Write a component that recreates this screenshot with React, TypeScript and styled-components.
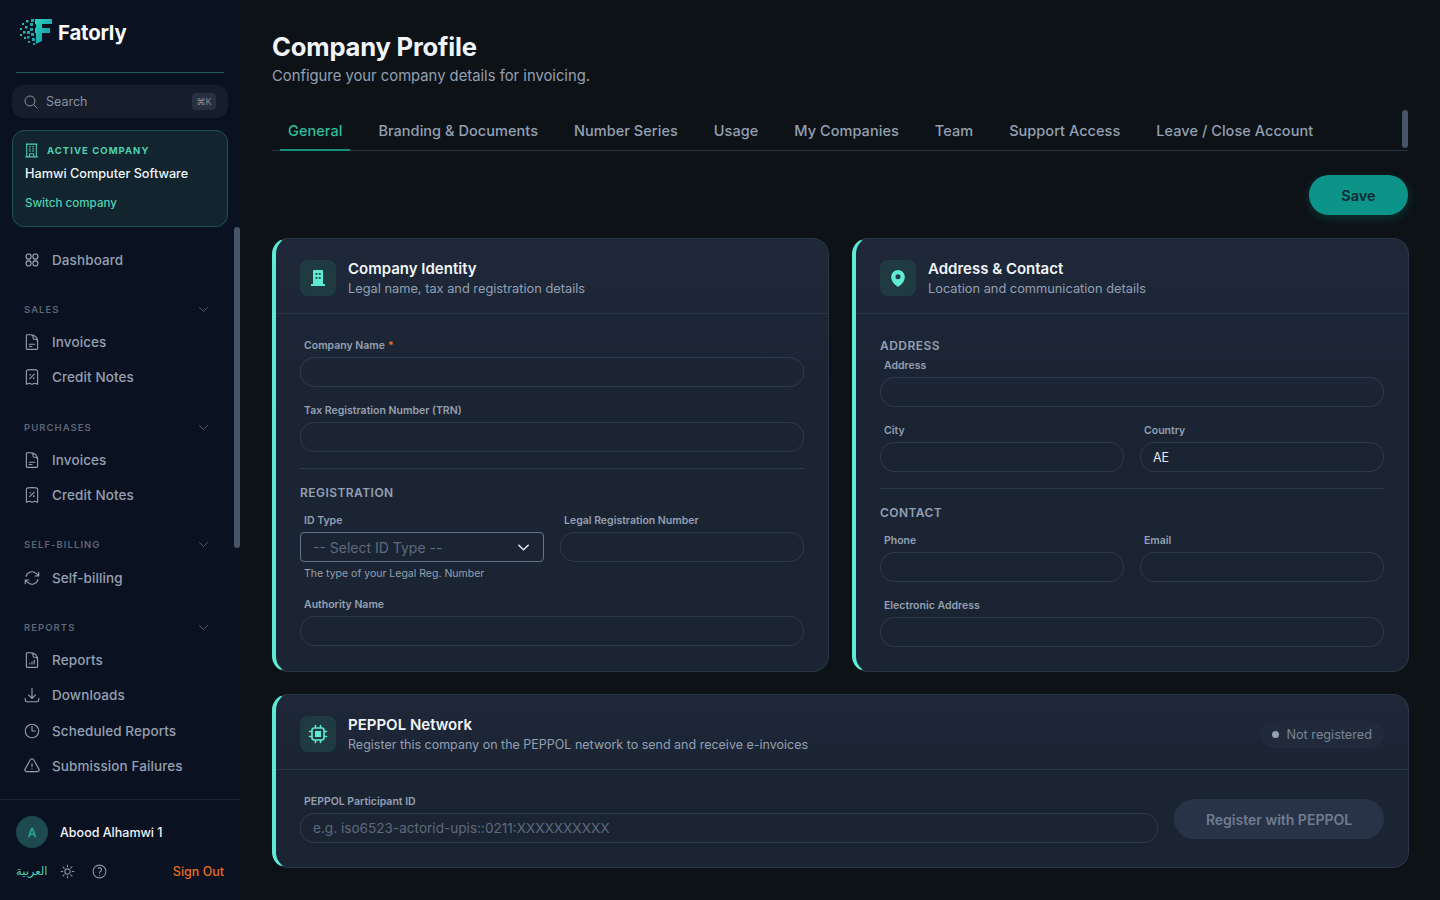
import React from "react";
import styled, { createGlobalStyle } from "styled-components";
import {
  HiOutlineMagnifyingGlass,
  HiOutlineBuildingOffice,
  HiOutlineChevronDown,
  HiOutlineDocumentText,
  HiOutlineReceiptPercent,
  HiOutlineArrowPath,
  HiOutlineDocumentChartBar,
  HiOutlineArrowDownTray,
  HiOutlineClock,
  HiOutlineExclamationTriangle,
  HiOutlineSun,
  HiOutlineQuestionMarkCircle,
  HiMapPin,
} from "react-icons/hi2";

const FONT = `Inter, "Noto Sans", "DejaVu Sans", sans-serif`;

const GlobalStyle = createGlobalStyle`
  * { box-sizing: border-box; }
  html, body { margin: 0; height: 100%; background: #0d1217; overflow: hidden; }
  body { font-family: ${FONT}; color: #e2e8f0; }
`;

const Shell = styled.div`
  display: flex;
  width: 1440px;
  height: 900px;
  overflow: hidden;
`;

const Sidebar = styled.aside`
  width: 240px;
  flex: none;
  height: 900px;
  background: #0a1120;
  display: flex;
  flex-direction: column;
`;

const Brand = styled.div`
  margin: 0 16px;
  height: 73px;
  border-bottom: 1px solid #1d5a5c;
  display: flex;
  align-items: flex-start;
  gap: 5px;
  padding: 18px 0 0 3px;
`;

const BrandName = styled.span`
  font-size: 20.4px;
  font-weight: 700;
  color: #f8fafc;
  line-height: 30px;
  letter-spacing: -0.2px;
`;

const SearchBox = styled.div`
  margin: 12px 12px 0;
  height: 33px;
  border-radius: 12px;
  background: #161e2c;
  display: flex;
  align-items: center;
  padding: 0 12px 0 11px;
  gap: 7px;
  color: #8792a4;
  font-size: 12.5px;
  svg { font-size: 16px; }
`;

const Kbd = styled.span`
  margin-left: auto;
  width: 24px;
  height: 17px;
  border-radius: 4px;
  background: #283141;
  color: #7d8899;
  font-size: 9px;
  display: flex;
  align-items: center;
  justify-content: center;
`;

const ActiveCard = styled.div`
  margin: 12px 12px 0;
  height: 97px;
  border-radius: 12px;
  background: #12252e;
  border: 1px solid #1f5054;
  padding: 12px 12px 0;
`;

const ActiveLabel = styled.div`
  display: flex;
  align-items: center;
  gap: 7px;
  font-size: 9.5px;
  font-weight: 700;
  letter-spacing: 1.05px;
  color: #4fd1b5;
  height: 15px;
  svg { font-size: 17px; margin-left: -2px; }
`;

const ActiveName = styled.div`
  margin-top: 7px;
  font-size: 12.7px;
  font-weight: 500;
  color: #f1f5f9;
  line-height: 18px;
`;

const SwitchLink = styled.div`
  margin-top: 12px;
  font-size: 11.6px;
  font-weight: 500;
  color: #4fd1b5;
  line-height: 16px;
`;

const Nav = styled.nav`
  position: relative;
  flex: 1;
  min-height: 0;
  overflow: hidden;
  padding-top: 15px;
`;

const ScrollThumb = styled.div<{ $height: number }>`
  position: absolute;
  top: 0;
  right: 0;
  width: 6px;
  height: ${(p) => p.$height}px;
  border-radius: 3px;
  background: #475569;
`;

const NavItem = styled.div`
  height: 35.4px;
  display: flex;
  align-items: center;
  gap: 11px;
  padding-left: 23px;
  font-size: 13.5px;
  font-weight: 500;
  letter-spacing: 0.1px;
  color: #94a0b2;
  svg { font-size: 18px; flex: none; }
`;

const NavHeader = styled.div`
  height: 16px;
  margin: 24px 0 7px;
  padding: 0 30px 0 24px;
  display: flex;
  align-items: center;
  justify-content: space-between;
  font-size: 9.5px;
  font-weight: 600;
  letter-spacing: 1.05px;
  color: #5c6779;
  svg { font-size: 13px; }
`;

const UserPanel = styled.div`
  height: 101px;
  flex: none;
  border-top: 1px solid #1e2635;
  padding: 16px 16px 0;
`;

const UserRow = styled.div`
  display: flex;
  align-items: center;
  gap: 12px;
`;

const Avatar = styled.div`
  width: 32px;
  height: 32px;
  border-radius: 50%;
  background: #1d4a4f;
  color: #21a98f;
  font-size: 12px;
  font-weight: 600;
  display: flex;
  align-items: center;
  justify-content: center;
`;

const UserName = styled.span`
  font-size: 12.5px;
  font-weight: 500;
  color: #f1f5f9;
`;

const UserActions = styled.div`
  display: flex;
  align-items: center;
  margin-top: 13px;
  height: 20px;
  color: #8b96a8;
  svg { font-size: 17px; }
`;

const Lang = styled.span`
  font-size: 11.5px;
  color: #4fd1b5;
  width: 42.5px;
`;

const IconSlot = styled.span`
  display: flex;
  width: 32px;
`;

const SignOut = styled.span`
  margin-left: auto;
  font-size: 12.5px;
  font-weight: 500;
  color: #ea6c23;
`;

const Main = styled.main`
  flex: 1;
  min-width: 0;
  padding: 32px 32px 0;
  background: #0d1217;
`;

const Title = styled.h1`
  margin: 0;
  font-size: 25.6px;
  font-weight: 700;
  line-height: 30px;
  color: #f1f5f9;
  letter-spacing: -0.2px;
`;

const Subtitle = styled.p`
  margin: 3px 0 0;
  font-size: 14.8px;
  line-height: 22px;
  color: #94a0b2;
`;

const Tabs = styled.div`
  position: relative;
  margin-top: 23px;
  height: 41px;
  padding-left: 8px;
  display: flex;
  border-bottom: 1px solid #2c3645;
`;

const Tab = styled.div<{ $active?: boolean }>`
  height: 40px;
  padding: 0 8px;
  margin-right: 20px;
  display: flex;
  align-items: center;
  font-size: 14.5px;
  font-weight: 500;
  letter-spacing: 0.05px;
  white-space: nowrap;
  color: ${(p) => (p.$active ? "#2ebd9f" : "#94a0b2")};
  box-shadow: ${(p) => (p.$active ? "inset 0 -1px 0 #14907f, 0 1px 0 #14907f" : "none")};
`;

const SaveRow = styled.div`
  display: flex;
  justify-content: flex-end;
  margin-top: 24px;
`;

const SaveButton = styled.button`
  width: 99px;
  height: 40px;
  border: none;
  border-radius: 20px;
  background: #0d9488;
  color: #0c2a33;
  font-family: ${FONT};
  font-size: 14.5px;
  font-weight: 600;
  box-shadow: 0 3px 10px rgba(13, 148, 136, 0.28);
`;

const CardGrid = styled.div`
  display: grid;
  grid-template-columns: 557px 557px;
  gap: 22px 23px;
  margin-top: 23px;
`;

const Card = styled.section<{ $wide?: boolean }>`
  grid-column: ${(p) => (p.$wide ? "1 / 3" : "auto")};
  height: ${(p) => (p.$wide ? "174px" : "434px")};
  background: linear-gradient(180deg, #1e2839 0%, #1b2433 40%);
  border: 1px solid #2a3547;
  border-left: 4px solid #5eead4;
  border-radius: 16px;
`;

const CardHeader = styled.header`
  height: 75px;
  padding: 4px 24px 0;
  display: flex;
  align-items: center;
  gap: 12px;
  border-bottom: 1px solid #2a3547;
`;

const HeaderIcon = styled.div`
  width: 36px;
  height: 36px;
  border-radius: 8px;
  background: #203a42;
  color: #5eead4;
  display: flex;
  align-items: center;
  justify-content: center;
  font-size: 20px;
`;

const HeaderText = styled.div`
  flex: 1;
`;

const CardTitle = styled.div`
  font-size: 15px;
  font-weight: 600;
  line-height: 20px;
  color: #f1f5f9;
`;

const CardSubtitle = styled.div<{ $size?: number }>`
  margin-top: 1px;
  font-size: ${(p) => p.$size ?? 12.8}px;
  line-height: 18px;
  color: #94a0b2;
`;

const CardBody = styled.div`
  padding: 25px 24px 0;
`;

const Label = styled.div`
  padding-left: 4px;
  height: 14px;
  line-height: 14px;
  font-size: 10.5px;
  font-weight: 600;
  color: #94a0b2;
  margin-bottom: 4px;
`;

const Required = styled.span`
  color: #ea6c23;
  margin-left: 3px;
`;

const Input = styled.div<{ $placeholder?: boolean }>`
  height: 30px;
  border: 1px solid #2e394b;
  border-radius: 14px;
  padding: 0 12px;
  display: flex;
  align-items: center;
  font-size: ${(p) => (p.$placeholder ? "13.6px" : "12.5px")};
  color: ${(p) => (p.$placeholder ? "#5e6a7d" : "#e2e8f0")};
  white-space: nowrap;
`;

const SelectBox = styled.div`
  height: 30px;
  border: 1px solid #64748b;
  border-radius: 4px;
  padding: 0 12px;
  display: flex;
  align-items: center;
  justify-content: space-between;
  font-size: 14px;
  color: #5e6a7d;
  svg { color: #e2e8f0; font-size: 15px; stroke-width: 2.4; }
`;

const Hint = styled.div`
  padding-left: 4px;
  margin-top: 5px;
  height: 14px;
  line-height: 14px;
  font-size: 10.5px;
  color: #94a0b2;
`;

const Field = styled.div<{ $top?: number }>`
  margin-top: ${(p) => p.$top ?? 0}px;
`;

const Columns = styled.div<{ $top?: number }>`
  display: grid;
  grid-template-columns: 1fr 1fr;
  gap: 16px;
  margin-top: ${(p) => p.$top ?? 0}px;
`;

const Divider = styled.hr`
  border: none;
  border-top: 1px solid #2e394b;
  margin: 16px 0 16px;
`;

const SectionLabel = styled.div<{ $first?: boolean }>`
  height: 16px;
  margin-top: ${(p) => (p.$first ? "-1px" : "0")};
  line-height: 16px;
  font-size: 12px;
  font-weight: 600;
  letter-spacing: 0.45px;
  color: #94a0b2;
`;

const StatusPill = styled.div`
  height: 27px;
  padding: 0 12px;
  border-radius: 14px;
  background: #202a3a;
  display: flex;
  align-items: center;
  gap: 7px;
  font-size: 12.7px;
  color: #7b8799;
`;

const StatusDot = styled.span`
  width: 7px;
  height: 7px;
  border-radius: 50%;
  background: #94a0b2;
`;

const PeppolRow = styled.div`
  display: flex;
  align-items: flex-end;
  gap: 16px;
`;

const PeppolField = styled.div`
  flex: 1;
`;

const RegisterButton = styled.button`
  width: 210px;
  height: 40px;
  margin-bottom: 4px;
  border: none;
  border-radius: 20px;
  background: #283347;
  color: #6f7c90;
  font-family: ${FONT};
  font-size: 14px;
  font-weight: 600;
`;

const GridIcon = () => (
  <svg width="18" height="18" viewBox="0 0 18 18" fill="none" stroke="currentColor" strokeWidth="1.3">
    <rect x="3.2" y="3.2" width="4.8" height="4.8" rx="1.7" />
    <rect x="10" y="3.2" width="4.8" height="4.8" rx="1.7" />
    <rect x="3.2" y="10" width="4.8" height="4.8" rx="1.7" />
    <rect x="10" y="10" width="4.8" height="4.8" rx="1.7" />
  </svg>
);

const BuildingIcon = () => (
  <svg width="14" height="16" viewBox="0 0 14 16">
    <path d="M2 1a1 1 0 0 1 1-1h8a1 1 0 0 1 1 1v13H2Z" fill="currentColor" />
    <rect x="0" y="14" width="14" height="2" fill="currentColor" />
    <rect x="4.6" y="3" width="1.8" height="1.8" fill="#203a42" />
    <rect x="7.8" y="3" width="1.8" height="1.8" fill="#203a42" />
    <rect x="4.6" y="7" width="1.8" height="1.8" fill="#203a42" />
    <rect x="7.8" y="7" width="1.8" height="1.8" fill="#203a42" />
  </svg>
);

const ChipIcon = () => (
  <svg width="20" height="20" viewBox="0 0 20 20" fill="none" stroke="currentColor" strokeWidth="1.6" strokeLinecap="round">
    <rect x="4" y="4" width="12" height="12" rx="2.2" />
    <rect x="7" y="7" width="6" height="6" fill="currentColor" stroke="none" />
    <path d="M7.5 1.5V3.5M12.5 1.5V3.5M7.5 16.5V18.5M12.5 16.5V18.5M1.5 7.5H3.5M1.5 12.5H3.5M16.5 7.5H18.5M16.5 12.5H18.5" />
  </svg>
);

const logoDots = [
  [1, 11, 2], [1, 17, 2], [3, 6, 2], [4, 14, 2.5], [5, 20, 2], [6, 9, 2.5], [7, 3, 2.5],
  [8, 14, 3], [8, 19, 2.5], [9, 24, 2], [11, 6, 3], [11, 11, 3], [12, 2, 3], [12, 16, 3],
  [13, 21, 3], [14, 26, 2],
];

const Logo = () => (
  <svg width="34" height="28" viewBox="0 0 34 28">
    <defs>
      <linearGradient id="logoF" x1="0" y1="0" x2="1" y2="1">
        <stop offset="0" stopColor="#2dd4bf" />
        <stop offset="1" stopColor="#0e8fa3" />
      </linearGradient>
    </defs>
    {logoDots.map(([x, y, s], i) => (
      <rect key={i} x={x} y={y - 1} width={s} height={s} fill={i < 7 ? "#2fb7a8" : "#1aa4ad"} />
    ))}
    <path d="M16 1H33V6H23V10H31V15H23V23L17 26V15H16V10H17V6H16Z" fill="url(#logoF)" />
  </svg>
);

const NavSection = ({ title, children }: { title: string; children: React.ReactNode }) => (
  <div>
    <NavHeader>
      {title}
      <HiOutlineChevronDown />
    </NavHeader>
    {children}
  </div>
);

const App = () => {
  const tabs = ["Branding & Documents", "Number Series", "Usage", "My Companies", "Team", "Support Access", "Leave / Close Account"];

  return (
    <>
      <GlobalStyle />
      <Shell>
        <Sidebar>
          <Brand>
            <Logo />
            <BrandName>Fatorly</BrandName>
          </Brand>
          <SearchBox>
            <HiOutlineMagnifyingGlass />
            Search
            <Kbd>⌘K</Kbd>
          </SearchBox>
          <ActiveCard>
            <ActiveLabel>
              <HiOutlineBuildingOffice />
              ACTIVE COMPANY
            </ActiveLabel>
            <ActiveName>Hamwi Computer Software</ActiveName>
            <SwitchLink>Switch company</SwitchLink>
          </ActiveCard>
          <Nav>
            <ScrollThumb $height={321} />
            <NavItem>
              <GridIcon />
              Dashboard
            </NavItem>
            <NavSection title="SALES">
              <NavItem><HiOutlineDocumentText />Invoices</NavItem>
              <NavItem><HiOutlineReceiptPercent />Credit Notes</NavItem>
            </NavSection>
            <NavSection title="PURCHASES">
              <NavItem><HiOutlineDocumentText />Invoices</NavItem>
              <NavItem><HiOutlineReceiptPercent />Credit Notes</NavItem>
            </NavSection>
            <NavSection title="SELF-BILLING">
              <NavItem><HiOutlineArrowPath />Self-billing</NavItem>
            </NavSection>
            <NavSection title="REPORTS">
              <NavItem><HiOutlineDocumentChartBar />Reports</NavItem>
              <NavItem><HiOutlineArrowDownTray />Downloads</NavItem>
              <NavItem><HiOutlineClock />Scheduled Reports</NavItem>
              <NavItem><HiOutlineExclamationTriangle />Submission Failures</NavItem>
            </NavSection>
          </Nav>
          <UserPanel>
            <UserRow>
              <Avatar>A</Avatar>
              <UserName>Abood Alhamwi 1</UserName>
            </UserRow>
            <UserActions>
              <Lang>العربية</Lang>
              <IconSlot><HiOutlineSun /></IconSlot>
              <IconSlot><HiOutlineQuestionMarkCircle /></IconSlot>
              <SignOut>Sign Out</SignOut>
            </UserActions>
          </UserPanel>
        </Sidebar>
        <Main>
          <Title>Company Profile</Title>
          <Subtitle>Configure your company details for invoicing.</Subtitle>
          <Tabs>
            <ScrollThumb $height={38} />
            <Tab $active>General</Tab>
            {tabs.map((tab) => (
              <Tab key={tab}>{tab}</Tab>
            ))}
          </Tabs>
          <SaveRow>
            <SaveButton>Save</SaveButton>
          </SaveRow>
          <CardGrid>
            <Card>
              <CardHeader>
                <HeaderIcon><BuildingIcon /></HeaderIcon>
                <HeaderText>
                  <CardTitle>Company Identity</CardTitle>
                  <CardSubtitle>Legal name, tax and registration details</CardSubtitle>
                </HeaderText>
              </CardHeader>
              <CardBody>
                <Label>Company Name<Required>*</Required></Label>
                <Input />
                <Field $top={17}>
                  <Label>Tax Registration Number (TRN)</Label>
                  <Input />
                </Field>
                <Divider />
                <SectionLabel>REGISTRATION</SectionLabel>
                <Columns $top={13}>
                  <div>
                    <Label>ID Type</Label>
                    <SelectBox>
                      -- Select ID Type --
                      <HiOutlineChevronDown />
                    </SelectBox>
                    <Hint>The type of your Legal Reg. Number</Hint>
                  </div>
                  <div>
                    <Label>Legal Registration Number</Label>
                    <Input />
                  </div>
                </Columns>
                <Field $top={17}>
                  <Label>Authority Name</Label>
                  <Input />
                </Field>
              </CardBody>
            </Card>
            <Card>
              <CardHeader>
                <HeaderIcon><HiMapPin /></HeaderIcon>
                <HeaderText>
                  <CardTitle>Address &amp; Contact</CardTitle>
                  <CardSubtitle>Location and communication details</CardSubtitle>
                </HeaderText>
              </CardHeader>
              <CardBody>
                <SectionLabel $first>ADDRESS</SectionLabel>
                <Field $top={5}>
                  <Label>Address</Label>
                  <Input />
                </Field>
                <Columns $top={17}>
                  <div>
                    <Label>City</Label>
                    <Input />
                  </div>
                  <div>
                    <Label>Country</Label>
                    <Input>AE</Input>
                  </div>
                </Columns>
                <Divider />
                <SectionLabel>CONTACT</SectionLabel>
                <Columns $top={13}>
                  <div>
                    <Label>Phone</Label>
                    <Input />
                  </div>
                  <div>
                    <Label>Email</Label>
                    <Input />
                  </div>
                </Columns>
                <Field $top={17}>
                  <Label>Electronic Address</Label>
                  <Input />
                </Field>
              </CardBody>
            </Card>
            <Card $wide>
              <CardHeader>
                <HeaderIcon><ChipIcon /></HeaderIcon>
                <HeaderText>
                  <CardTitle>PEPPOL Network</CardTitle>
                  <CardSubtitle $size={12.5}>Register this company on the PEPPOL network to send and receive e-invoices</CardSubtitle>
                </HeaderText>
                <StatusPill>
                  <StatusDot />
                  Not registered
                </StatusPill>
              </CardHeader>
              <CardBody>
                <PeppolRow>
                  <PeppolField>
                    <Label>PEPPOL Participant ID</Label>
                    <Input $placeholder>e.g. iso6523-actorid-upis::0211:XXXXXXXXXX</Input>
                  </PeppolField>
                  <RegisterButton>Register with PEPPOL</RegisterButton>
                </PeppolRow>
              </CardBody>
            </Card>
          </CardGrid>
        </Main>
      </Shell>
    </>
  );
};

export default App;
